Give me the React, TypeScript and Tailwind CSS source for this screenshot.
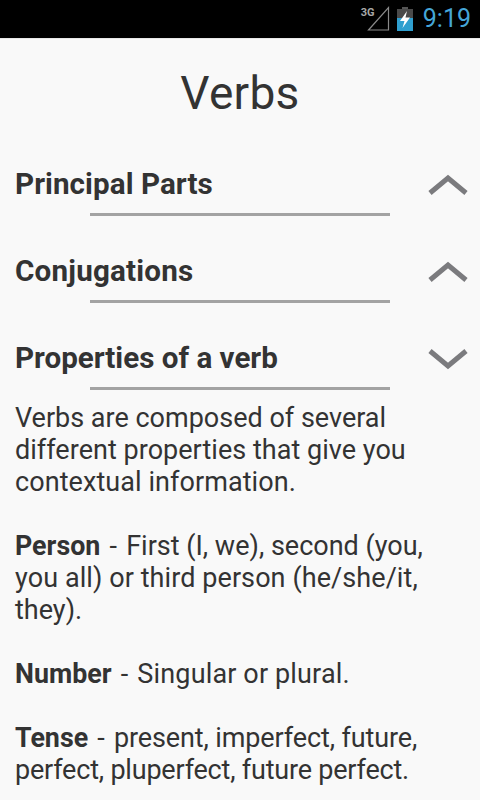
export default function App() {
  const Section = ({ title, up, track }: { title: string; up: boolean; track: string }) => (
    <div className="h-[87px] flex flex-col">
      <div className="h-[84px] flex items-end justify-between pl-[15px] pr-[11px] pb-[9px]">
        <span className={"text-[29.6px] leading-[40px] font-bold text-[#333333] " + track}>{title}</span>
        <svg width="42" height="24" viewBox="0 0 42 24" className="mb-[7px]" fill="none">
          <path d={up ? "M3 20 L21 5 L39 20" : "M3 4 L21 19 L39 4"} stroke="#7b7b7e" strokeWidth="5" />
        </svg>
      </div>
      <div className="h-[3px] w-[300px] ml-[90px] bg-[#a3a3a3]" />
    </div>
  );
  const Dash = () => <span className="[word-spacing:2.5px]"> - </span>;
  return (
    <div className="w-[480px] h-[800px] overflow-hidden bg-[#f9f9f9] font-['Roboto',sans-serif] flex flex-col">
      <div className="h-[38px] bg-black flex items-center justify-end pr-[9px] shrink-0">
        <div className="relative w-[29px] h-[30px] mr-[7px]">
          <span className="absolute left-0 top-[3px] text-[11px] leading-[12px] font-bold text-[#a8a8a8]">3G</span>
          <svg width="29" height="30" viewBox="0 0 29 30" fill="none">
            <path d="M7.5 26 L27.5 3.5 V26 Z" stroke="#8a8a8a" strokeWidth="1.2" />
          </svg>
        </div>
        <svg width="16" height="24" viewBox="0 0 16 24" className="mr-[10px]">
          <rect x="5" y="0" width="6" height="3" fill="#555" />
          <rect x="0" y="2" width="16" height="22" fill="#4a4a4a" />
          <rect x="0" y="11" width="16" height="13" fill="#2f9fcf" />
          <path d="M10 4 L3 14 H7.5 L5.5 21 L13 10.5 H8.5 Z" fill="#fff" />
        </svg>
        <span className="text-[25px] leading-[30px] text-[#45a6d8]">9:19</span>
      </div>
      <div className="h-[1px] bg-[#e8e8e8] shrink-0" />
      <div className="h-[103px] pt-[24px] text-center text-[46px] leading-[60px] text-[#333333] shrink-0 tracking-[0.3px]">Verbs</div>
      <div className="-mt-[13px]">
        <Section title="Principal Parts" up track="tracking-[0.07px]" />
        <Section title="Conjugations" up track="tracking-[0.2px]" />
        <Section title="Properties of a verb" up={false} track="" />
      </div>
      <div className="px-[15px] pt-[12px] text-[27px] leading-[32px] text-[#333333] whitespace-nowrap">
        <p>Verbs are composed of several<br /><span className="tracking-[0.03px]">different properties that give you</span><br /><span className="tracking-[0.07px]">contextual information.</span></p>
        <p className="mt-[32px]"><b className="text-[26.8px]">Person</b><Dash />First (I, we), second (you,<br /><span className="tracking-[0.08px]">you all) or third person (he/she/it,</span><br />they).</p>
        <p className="mt-[32px]"><b className="text-[26.8px]">Number</b><Dash /><span className="tracking-[0.15px]">Singular or plural.</span></p>
        <p className="mt-[32px]"><b className="text-[26.8px]">Tense</b><Dash /><span className="tracking-[-0.12px]">present, imperfect, future,</span><br /><span className="tracking-[-0.2px]">perfect, pluperfect, future perfect.</span></p>
      </div>
    </div>
  );
}
